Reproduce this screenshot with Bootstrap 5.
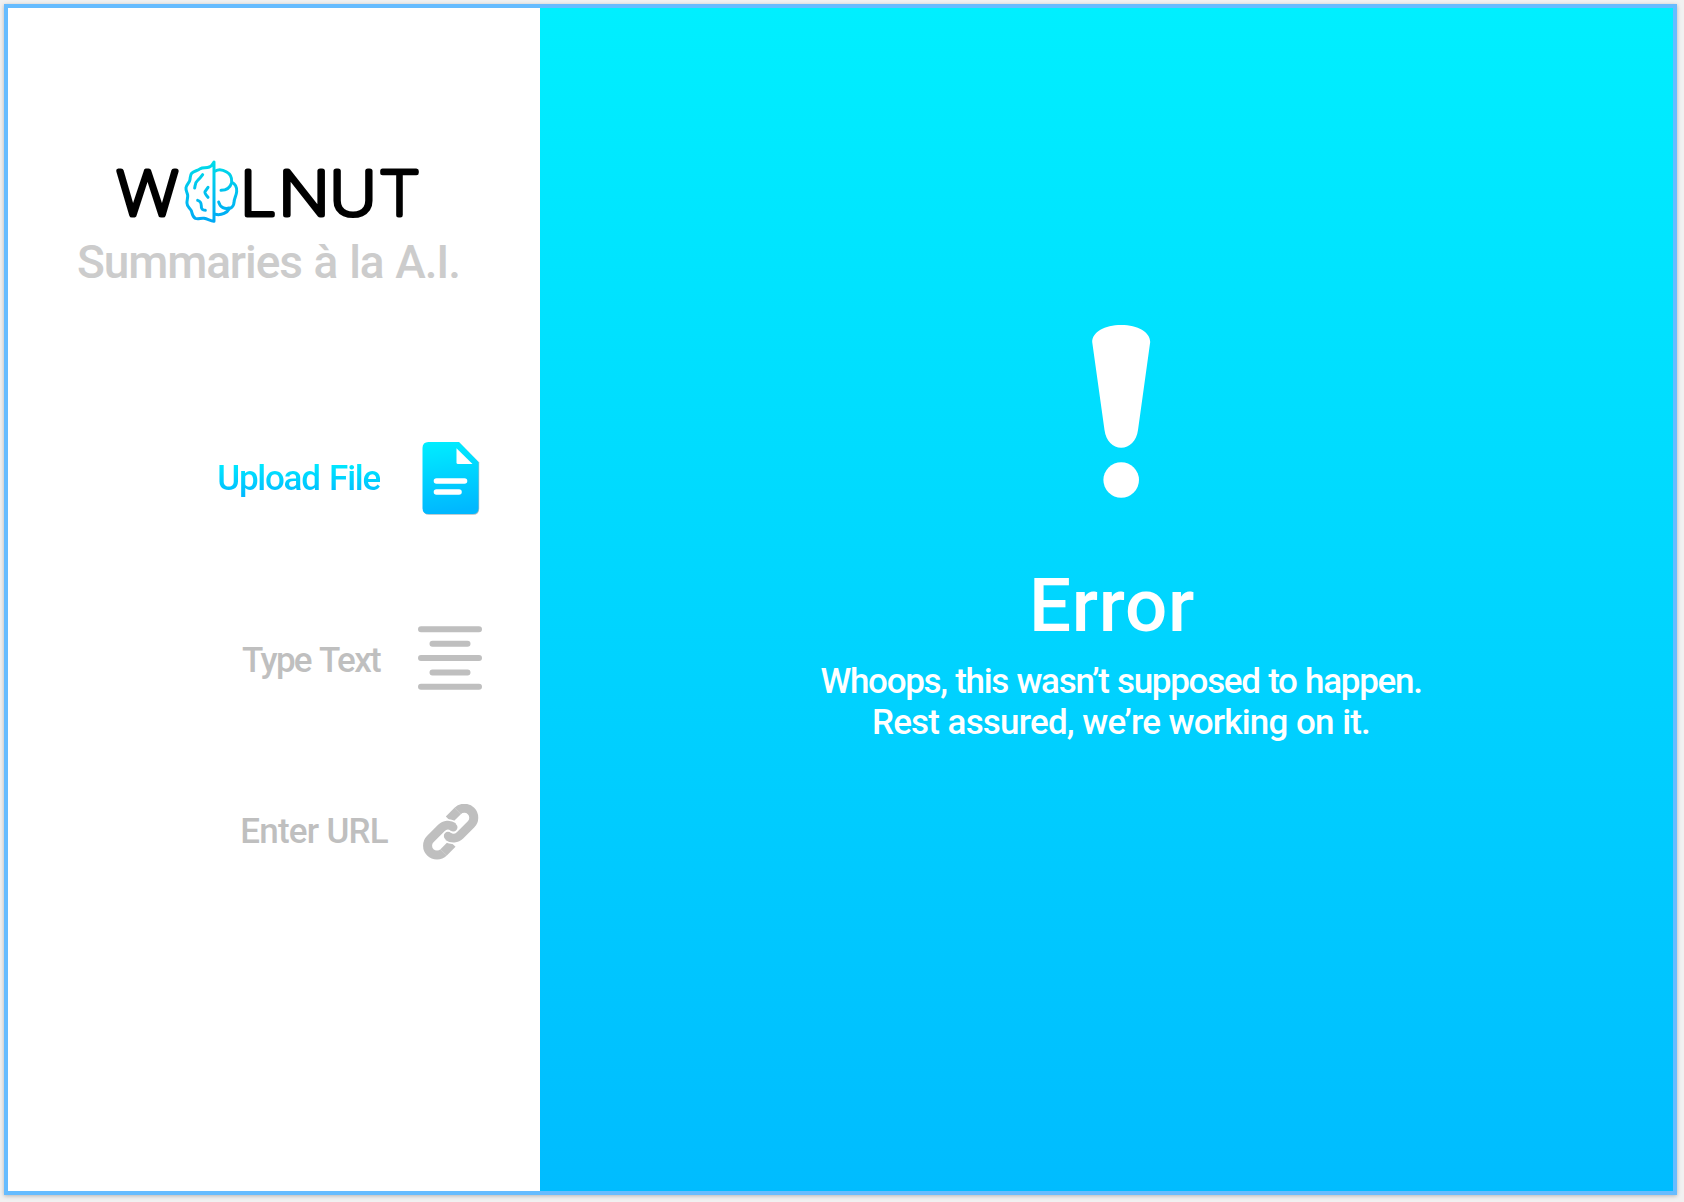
<!DOCTYPE html>
<html lang="en">
<head>
<meta charset="utf-8">
<title>Wolnut</title>
<link href="https://cdn.jsdelivr.net/npm/bootstrap@5.3.0/dist/css/bootstrap.min.css" rel="stylesheet">
<script src="https://cdn.jsdelivr.net/npm/bootstrap@5.3.0/dist/js/bootstrap.bundle.min.js"></script>
<style>
  body { background: #f1f1f1; font-family: Roboto, "Liberation Sans", sans-serif; padding: 4px 7px 7px 4px; }
  .app-frame { border: 4px solid #66bcff; box-shadow: 0 1px 4px rgba(0,0,0,.25); }
  .side-pane { width: 532px; padding-top: 144px; }
  .brand { margin-left: 104px; width: 312px; height: 82px; overflow: visible; }
  .brand text { font-family: Roboto, sans-serif; font-weight: 100; }
  .tagline { margin: 1px 0 0 69px; font-size: 46px; line-height: 54px; color: #ccc; letter-spacing: -1.1px; word-spacing: 1.5px; font-weight: 500; white-space: nowrap; }
  .menu { margin-top: 153px; padding-right: 58px; }
  .menu-row { color: #bfbfbf; font-size: 35px; line-height: 40px; gap: 38px; text-decoration: none; }
  .menu-row .ico { width: 64px; flex: none; }
  .row-file { height: 72px; letter-spacing: -1.25px; word-spacing: 2px; }
  .row-text { height: 64px; margin-top: 112px; letter-spacing: -1.7px; word-spacing: 2px; }
  .row-text span { padding-top: 6px; }
  .row-url { height: 56px; margin-top: 114px; gap: 30px; letter-spacing: -.75px; }
  .lbl-grad { background: linear-gradient(#00eaff 10%, #00baff 90%); -webkit-background-clip: text; background-clip: text; color: transparent; font-weight: 500; margin-top: 2px; }
  .error-pane { background: linear-gradient(#00efff, #00bcff); padding: 317px 0 0 29px; color: #fff; }
  .error-title { font-size: 74.5px; line-height: 84px; font-weight: 500; letter-spacing: .7px; margin: 65px 18px 0 0; }
  .error-msg { font-size: 35px; line-height: 41px; font-weight: 500; margin-top: 13px; white-space: nowrap; }
  .msg-lead { letter-spacing: -1.3px; word-spacing: 1px; }
  .msg-tail { letter-spacing: -.8px; word-spacing: .5px; }
</style>
</head>
<body class="vh-100 overflow-hidden">
<div class="app-frame d-flex h-100">
  <aside class="side-pane bg-white d-flex flex-column flex-shrink-0">
    <svg class="brand" viewBox="112 152 312 82" role="img" aria-label="Wolnut">
      <defs><linearGradient id="nut" gradientUnits="userSpaceOnUse" x1="0" y1="32" x2="0" y2="218"><stop offset="0" stop-color="#00dce8"/><stop offset="1" stop-color="#00a8f5"/></linearGradient></defs>
      <g font-size="62" stroke="#000" stroke-width="5" stroke-linejoin="round">
        <text x="117" y="214.500" textLength="61" lengthAdjust="spacingAndGlyphs">W</text>
        <text x="241" y="214.500" textLength="33" lengthAdjust="spacingAndGlyphs">L</text>
        <text x="279" y="214.500" textLength="50" lengthAdjust="spacingAndGlyphs">N</text>
        <text x="330" y="214.500" textLength="46" lengthAdjust="spacingAndGlyphs">U</text>
        <text x="381" y="214.500" textLength="37" lengthAdjust="spacingAndGlyphs">T</text>
      </g>
      <g transform="translate(170 150) scale(.33333)" fill="none" stroke="url(#nut)" stroke-width="9" stroke-linecap="round" stroke-linejoin="round">
        <path d="M132 36V214C120 211 112 207 102 205C92 204 84 208 76 205C66 200 67 190 64 182C59 173 51 170 51 160C50 151 54 144 53 135C51 126 47 122 48 113C49 104 56 100 59 92C62 84 59 77 65 70C72 62 82 63 91 56C98 51 108 55 118 51C126 48 128 42 132 36Z"/>
        <path d="M136 63C148 55 162 61 170 66C181 72 186 82 185 96C195 101 201 113 200 125C199 138 192 145 192 158C191 169 184 174 178 176C172 187 156 197 136 193M185 98C181 112 172 121 153 121M146 156C150 172 165 179 178 174"/>
        <path d="M98 74C93 81 89 86 83 91C75 97 76 105 74 114M114 112L105 125C103 129 108 135 114 142M83 151C91 153 94 160 94 168C93 177 98 181 106 181"/>
      </g>
    </svg>
    <div class="tagline">Summaries à la A.I.</div>

    <nav class="menu d-flex flex-column">
      <a class="menu-row row-file d-flex align-items-center justify-content-end"><span class="lbl-grad">Upload File</span>
        <svg class="ico" height="74" viewBox="-4.5 -1 64 74">
          <defs><linearGradient id="doc" x1="0" y1="0" x2=".1" y2="1"><stop offset="0" stop-color="#00eeff"/><stop offset="1" stop-color="#00b8ff"/></linearGradient></defs>
          <path d="M6 .7H37L56.700 20.500V66.700Q56.700 72.700 50.700 72.700H6.500Q.7 72.700 .7 66.700V6Q.7 .7 6 .7Z" fill="#a5bcc4"/>
          <path d="M6 0H36.500L56 20V66Q56 72 50 72H6Q0 72 0 66V6Q0 0 6 0Z" fill="url(#doc)"/>
          <path d="M34 6.200L50 22H35.500Q34 22 34 20.500Z" fill="#fff"/>
          <path d="M14 39H42M14 50H36.500" stroke="#fff" stroke-width="5.600" stroke-linecap="round"/>
        </svg></a>
      <a class="menu-row row-text d-flex align-items-center justify-content-end"><span class="fw-medium">Type Text</span>
        <svg class="ico" height="64" viewBox="0 0 64 64"><path d="M3 3.200H61M14.500 17.700H49.500M3 32H61M14.500 46.500H49.500M3 60.800H61" stroke="#bfbfbf" stroke-width="6" stroke-linecap="round"/></svg></a>
      <a class="menu-row row-url d-flex align-items-center justify-content-end"><span class="fw-medium">Enter URL</span>
        <svg class="ico" height="56" viewBox="654 71 192 168" fill="none" stroke="#bfbfbf" stroke-width="27">
          <path d="M731 216L757 190M773 92L747 118"/>
          <path d="M724 143A28 28 0 0 1 762 142M780 165A28 28 0 0 1 742 166" stroke="#fff" stroke-width="37" stroke-linecap="round"/>
          <path d="M731 216A28 28 0 0 1 691 176L724 143A28 28 0 0 1 760 140M773 92A28 28 0 0 1 813 132L780 165A28 28 0 0 1 744 168"/>
          <path d="M760 141V141.100M744 167V167.100" stroke-width="25" stroke-linecap="round"/>
        </svg></a>
    </nav>
  </aside>

  <main class="error-pane flex-grow-1 d-flex flex-column align-items-center text-center">
    <svg width="60" height="174" viewBox="1091.500 325 60 174" fill="#fff">
      <path d="M1092.700 342C1092.700 332 1105 325 1121.700 325S1150.700 332 1150.700 342L1138.500 430C1137 441 1130 447.700 1121.700 447.700S1106.500 441 1105 430Z"/>
      <circle cx="1121.700" cy="480" r="17.800"/>
    </svg>
    <h1 class="error-title">Error</h1>
    <p class="error-msg mb-0"><span class="msg-lead">Whoops, this wasn’t supposed to happen.</span><br><span class="msg-tail">Rest assured, we’re working on it.</span></p>
  </main>
</div>
</body>
</html>
